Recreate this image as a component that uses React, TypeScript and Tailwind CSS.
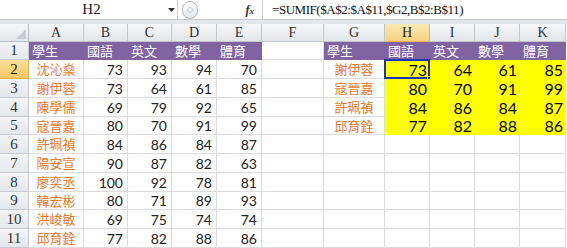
import React from "react"

const cols = [
  { key: "A", w: "w-[55px]" },
  { key: "B", w: "w-[44px]" },
  { key: "C", w: "w-[44px]" },
  { key: "D", w: "w-[45px]" },
  { key: "E", w: "w-[45px]" },
  { key: "F", w: "w-[62px]" },
  { key: "G", w: "w-[61px]" },
  { key: "H", w: "w-[45px]" },
  { key: "I", w: "w-[45px]" },
  { key: "J", w: "w-[45px]" },
  { key: "K", w: "w-[46px]" },
]

const heads = ["學生", "國語", "英文", "數學", "體育"]

const students: [string, number, number, number, number][] = [
  ["沈沁燊", 73, 93, 94, 70],
  ["謝伊蓉", 73, 64, 61, 85],
  ["陳學儒", 69, 79, 92, 65],
  ["寇晉嘉", 80, 70, 91, 99],
  ["許珮禎", 84, 86, 84, 87],
  ["陽安宣", 90, 87, 82, 63],
  ["廖奕丞", 100, 92, 78, 81],
  ["韓宏彬", 80, 71, 89, 93],
  ["洪峻敏", 69, 75, 74, 74],
  ["邱育銓", 77, 82, 88, 86],
]

const lookup: [string, number, number, number, number][] = [
  ["謝伊蓉", 73, 64, 61, 85],
  ["寇晉嘉", 80, 70, 91, 99],
  ["許珮禎", 84, 86, 84, 87],
  ["邱育銓", 77, 82, 88, 86],
]

const rowHeights = ["h-[19px]", "h-[19px]", "h-[19px]", "h-[18px]", "h-[19px]", "h-[19px]", "h-[19px]", "h-[18px]", "h-[19px]", "h-[19px]"]

const cjk = "font-['Noto_Sans_CJK_TC','Noto_Sans',sans-serif]"
const num = "font-['Lato','Liberation_Sans',sans-serif]"
const serif = "font-['Liberation_Serif',serif]"

function FormulaBar() {
  return (
    <div className="flex h-[20px] bg-[#e9ecf0] border-b border-[#c9ced6]">
      <div className="relative w-[178px] bg-white border-r border-[#c9ced6] flex items-center justify-center">
        <span className={`${serif} text-[15px] text-[#222] pl-[6px]`}>H2</span>
        <svg className="absolute right-[2px] top-[8px]" width="7" height="4" viewBox="0 0 7 4">
          <path d="M0 0h7L3.5 4z" fill="#333" />
        </svg>
      </div>
      <div className="w-[84px] flex items-center bg-white">
        <div className="ml-[4px] w-[16px] h-[18px] rounded-full border border-[#b5bac2] bg-gradient-to-b from-[#fdfdfd] to-[#e3e6ea] flex items-center justify-center">
          <div className="w-[6px] h-[6px] rounded-full border border-[#c5c9cf]" />
        </div>
        <span className={`${serif} italic font-bold text-[12px] text-[#333] ml-auto mr-[8px]`}>
          f<span className="text-[9px]">x</span>
        </span>
      </div>
      <div className="flex-1 bg-white border-l border-[#c9ced6] flex items-center pl-[9px]">
        <span className={`${serif} text-[13px] tracking-[-0.45px] text-[#111] whitespace-nowrap`}>=SUMIF($A$2:$A$11,$G2,B$2:B$11)</span>
      </div>
    </div>
  )
}

function HeaderRow() {
  return (
    <div className="flex h-[18px]">
      <div className="relative w-[29px] shrink-0 bg-gradient-to-b from-[#f6f7f9] to-[#e2e5e9] border-r border-b border-[#b9bec5]">
        <svg className="absolute right-[2px] bottom-[2px]" width="10" height="10" viewBox="0 0 10 10">
          <path d="M10 0V10H0z" fill="#c9cdd2" />
        </svg>
      </div>
      {cols.map((c) =>
        c.key === "H" ? (
          <div
            key={c.key}
            className={`${c.w} shrink-0 bg-gradient-to-b from-[#fbe7b4] to-[#f6d27d] border-r border-b border-[#e8b550] flex items-center justify-center ${serif} text-[14px] text-[#222]`}
          >
            {c.key}
          </div>
        ) : (
          <div
            key={c.key}
            className={`${c.w} shrink-0 bg-gradient-to-b from-[#f6f7f9] to-[#e2e5e9] border-r border-b border-[#c2c6cc] flex items-center justify-center ${serif} text-[14px] text-[#333]`}
          >
            {c.key}
          </div>
        )
      )}
    </div>
  )
}

function RowHeader({ n, h, active }: { n: number; h: string; active?: boolean }) {
  return (
    <div
      className={`${h} w-[29px] shrink-0 flex items-center justify-center border-r border-b ${serif} text-[15px] ${
        active
          ? "bg-gradient-to-b from-[#f9df9a] to-[#f3c962] border-[#e2b04a] text-[#222]"
          : "bg-gradient-to-b from-[#f3f4f6] to-[#e4e7eb] border-[#c7cbd1] text-[#333]"
      }`}
    >
      {n}
    </div>
  )
}

function TitleRow() {
  return (
    <div className="flex h-[18px]">
      <RowHeader n={1} h="h-[18px]" />
      {cols.map((c, i) => {
        if (c.key === "F") return <div key={c.key} className={`${c.w} shrink-0 bg-white border-r border-b border-[#dcdcdc]`} />
        const label = i < 5 ? heads[i] : heads[i - 6]
        return (
          <div key={c.key} className={`${c.w} shrink-0 bg-[#8064a2] flex items-center pl-[3px] ${cjk} text-[13px] text-white`}>
            {label}
          </div>
        )
      })}
    </div>
  )
}

function DataRow({ idx }: { idx: number }) {
  const s = students[idx]
  const l = lookup[idx]
  const h = rowHeights[idx]
  return (
    <div className={`flex ${h}`}>
      <RowHeader n={idx + 2} h={h} active={idx === 0} />
      <div className={`${cols[0].w} shrink-0 border-r border-b border-[#dcdcdc] flex items-center justify-center ${cjk} text-[13px] text-[#e8782a]`}>
        {s[0]}
      </div>
      {[1, 2, 3, 4].map((k) => (
        <div key={k} className={`${cols[k].w} shrink-0 border-r border-b border-[#dcdcdc] flex items-center justify-end pr-[4px] ${num} text-[14px] text-[#222]`}>
          {s[k]}
        </div>
      ))}
      <div className={`${cols[5].w} shrink-0 border-r border-b border-[#dcdcdc]`} />
      <div className={`${cols[6].w} shrink-0 border-r border-b border-[#dcdcdc] flex items-center justify-center ${cjk} text-[13px] text-[#e8782a]`}>
        {l ? l[0] : ""}
      </div>
      {[1, 2, 3, 4].map((k) =>
        l ? (
          <div
            key={k}
            className={`relative ${cols[6 + k].w} shrink-0 bg-[#ffff00] flex items-center justify-end pr-[3px] ${num} text-[16px] text-black`}
          >
            {l[k]}
            {idx === 0 && k === 1 && (
              <>
                <div className="absolute -left-[1px] -top-[1px] right-[0px] bottom-[0px] border-2 border-[#1f33b5]" />
                <div className="absolute -right-[3px] -bottom-[3px] w-[6px] h-[6px] bg-[#1f33b5] border border-white" />
              </>
            )}
          </div>
        ) : (
          <div key={k} className={`${cols[6 + k].w} shrink-0 border-r border-b border-[#dcdcdc]`} />
        )
      )}
    </div>
  )
}

export default function App() {
  return (
    <div className="w-[567px] h-[248px] overflow-hidden bg-white select-none">
      <FormulaBar />
      <div className="h-[4px] bg-[#e3e6ea]" />
      <HeaderRow />
      <TitleRow />
      {students.map((_, i) => (
        <DataRow key={i} idx={i} />
      ))}
    </div>
  )
}
